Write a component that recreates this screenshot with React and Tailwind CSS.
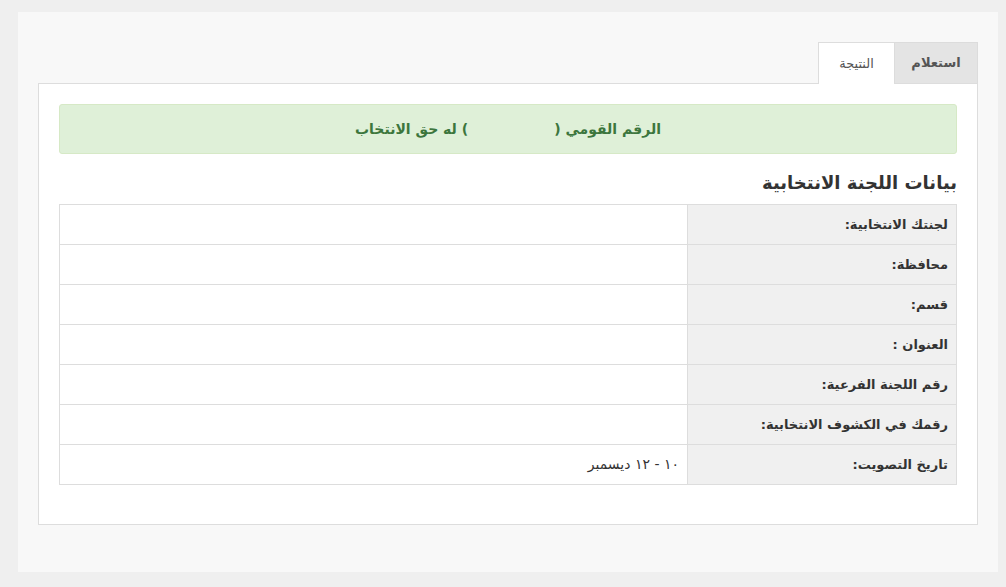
import React from "react";

const rows = [
  ["لجنتك الانتخابية:", ""],
  ["محافظة:", ""],
  ["قسم:", ""],
  ["العنوان :", ""],
  ["رقم اللجنة الفرعية:", ""],
  ["رقمك في الكشوف الانتخابية:", ""],
  ["تاريخ التصويت:", "١٠ - ١٢ ديسمبر"],
];

export default function App() {
  return (
    <div
      className="w-[1006px] h-[587px] bg-[#efefef] pt-[12px] pl-[18px]"
      style={{ fontFamily: '"DejaVu Sans", "Noto Sans", sans-serif' }}
    >
      <div dir="rtl" className="w-[980px] h-[560px] bg-[#f8f8f8] pt-[30px] pl-[20px] pr-[20px]">
        <div className="flex h-[41px]">
          <div className="w-[84px] h-[41px] bg-[#e4e4e4] border-t border-l border-r border-[#dcdcdc] flex items-center justify-center text-[13px] font-bold text-[#555]">
            استعلام
          </div>
          <div className="w-[76px] h-[42px] bg-white border-t border-l border-[#dddddd] flex items-center justify-center text-[13px] text-[#555] relative z-10">
            النتيجة
          </div>
        </div>
        <div className="h-[442px] bg-white border border-[#dddddd] p-[20px]">
          <div className="h-[50px] bg-[#dff0d8] border border-[#d6e9c6] rounded-[3px] flex items-center justify-center text-[14px] font-bold text-[#3c763d]">
            <span>الرقم القومي (</span>
            <span className="inline-block w-[86px]"></span>
            <span>) له حق الانتخاب</span>
          </div>
          <h2 className="mt-[18px] mb-[10px] text-[18px] leading-[22px] font-bold text-[#333]">
            بيانات اللجنة الانتخابية
          </h2>
          <table className="w-full border-collapse border border-[#dddddd]">
            <tbody>
              {rows.map(([label, value], i) => (
                <tr key={i} className="h-[40px]">
                  <td className="w-[269px] bg-[#f0f0f0] border border-[#dddddd] px-[8px] text-[13px] font-bold text-[#333]">
                    {label}
                  </td>
                  <td className="border border-[#dddddd] px-[8px] text-[14px] text-[#333]">
                    {value}
                  </td>
                </tr>
              ))}
            </tbody>
          </table>
        </div>
      </div>
    </div>
  );
}
